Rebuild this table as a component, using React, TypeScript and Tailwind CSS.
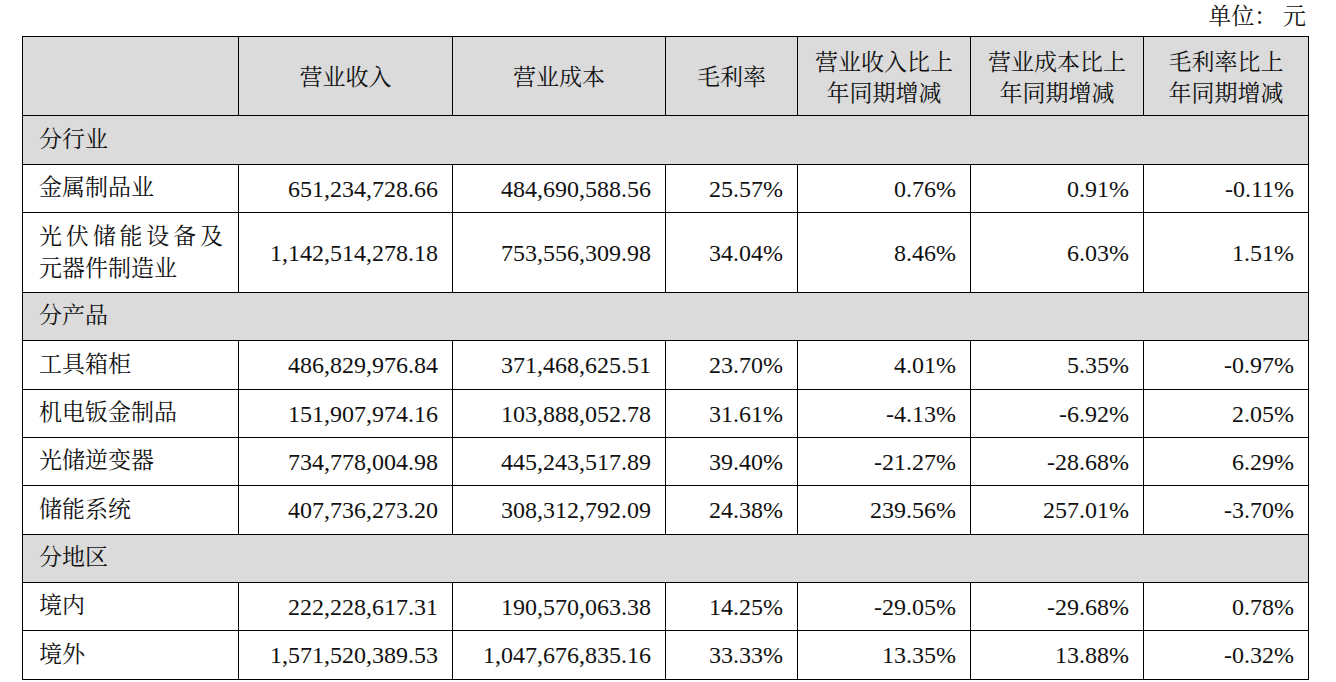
import React from 'react';

const font = '"Liberation Serif", "Noto Serif CJK SC", "Noto Sans CJK SC", serif';

type Row = { label: React.ReactNode; values: string[]; h: string };
type Section = { title: string; h: string; rows: Row[] };

const sections: Section[] = [
    {
        title: '分行业',
        h: 'h-[49px]',
        rows: [
            {
                label: '金属制品业',
                values: ['651,234,728.66', '484,690,588.56', '25.57%', '0.76%', '0.91%', '-0.11%'],
                h: 'h-[48px]',
            },
            {
                label: (
                    <div className="leading-[32px]">
                        <div className="text-justify [text-align-last:justify]">光伏储能设备及</div>
                        <div>元器件制造业</div>
                    </div>
                ),
                values: ['1,142,514,278.18', '753,556,309.98', '34.04%', '8.46%', '6.03%', '1.51%'],
                h: 'h-[80px]',
            },
        ],
    },
    {
        title: '分产品',
        h: 'h-[48px]',
        rows: [
            {
                label: '工具箱柜',
                values: ['486,829,976.84', '371,468,625.51', '23.70%', '4.01%', '5.35%', '-0.97%'],
                h: 'h-[49px]',
            },
            {
                label: '机电钣金制品',
                values: ['151,907,974.16', '103,888,052.78', '31.61%', '-4.13%', '-6.92%', '2.05%'],
                h: 'h-[48px]',
            },
            {
                label: '光储逆变器',
                values: ['734,778,004.98', '445,243,517.89', '39.40%', '-21.27%', '-28.68%', '6.29%'],
                h: 'h-[48px]',
            },
            {
                label: '储能系统',
                values: ['407,736,273.20', '308,312,792.09', '24.38%', '239.56%', '257.01%', '-3.70%'],
                h: 'h-[49px]',
            },
        ],
    },
    {
        title: '分地区',
        h: 'h-[48px]',
        rows: [
            {
                label: '境内',
                values: ['222,228,617.31', '190,570,063.38', '14.25%', '-29.05%', '-29.68%', '0.78%'],
                h: 'h-[48px]',
            },
            {
                label: '境外',
                values: ['1,571,520,389.53', '1,047,676,835.16', '33.33%', '13.35%', '13.88%', '-0.32%'],
                h: 'h-[49px]',
            },
        ],
    },
];

const headers: React.ReactNode[] = [
    '',
    '营业收入',
    '营业成本',
    '毛利率',
    <>营业收入比上<br />年同期增减</>,
    <>营业成本比上<br />年同期增减</>,
    <>毛利率比上<br />年同期增减</>,
];

export default function App() {
    return (
        <div className="min-h-[682px] bg-white text-[#111] text-[23px]" style={{ fontFamily: font }}>
            <div className="h-[36px] leading-[34px] text-right pr-[30px]">单位：&nbsp;元</div>

            <div className="pl-[22px]">
                <table className="table-fixed border-collapse w-[1286px]">
                    <colgroup>
                        <col className="w-[216px]" />
                        <col className="w-[214px]" />
                        <col className="w-[213px]" />
                        <col className="w-[132px]" />
                        <col className="w-[173px]" />
                        <col className="w-[173px]" />
                        <col className="w-[165px]" />
                    </colgroup>
                    <thead>
                        <tr className="h-[79px] bg-[#dbdbdb]">
                            {headers.map((h, i) => (
                                <th
                                    key={i}
                                    className="border border-black font-normal text-center align-middle leading-[31px] px-1 pt-[3px]"
                                >
                                    {h}
                                </th>
                            ))}
                        </tr>
                    </thead>
                    <tbody>
                        {sections.map((s) => (
                            <React.Fragment key={s.title}>
                                <tr className={`${s.h} bg-[#dbdbdb]`}>
                                    <td colSpan={7} className="border border-black pl-[16px] align-middle">
                                        {s.title}
                                    </td>
                                </tr>
                                {s.rows.map((r, ri) => (
                                    <tr key={ri} className={r.h}>
                                        <td className="border border-black pl-[16px] pr-[15px] align-middle">
                                            {r.label}
                                        </td>
                                        {r.values.map((v, vi) => (
                                            <td
                                                key={vi}
                                                className="border border-black text-right text-[24px] pr-[14px] align-middle whitespace-nowrap"
                                            >
                                                {v}
                                            </td>
                                        ))}
                                    </tr>
                                ))}
                            </React.Fragment>
                        ))}
                    </tbody>
                </table>
            </div>
        </div>
    );
}
